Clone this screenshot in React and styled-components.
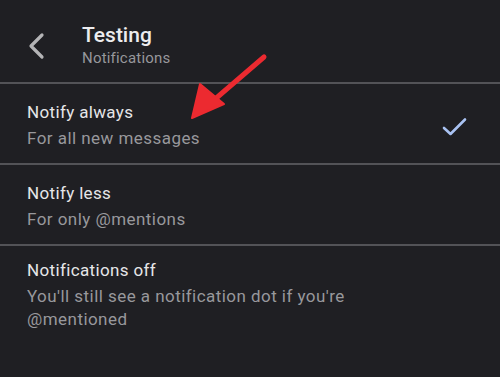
import React from 'react';
import styled, { createGlobalStyle, css } from 'styled-components';

const GlobalStyle = createGlobalStyle`
  html, body {
    margin: 0;
    padding: 0;
    background: #1f1f23;
  }
  body {
    font-family: Roboto, "Liberation Sans", Arial, sans-serif;
    -webkit-font-smoothing: antialiased;
  }
`;

const options = [
  { title: 'Notify always', desc: 'For all new messages', checked: true },
  { title: 'Notify less', desc: 'For only @mentions' },
  { title: 'Notifications off', desc: "You'll still see a notification dot if you're @mentioned", tight: true },
];

class App extends React.Component {
  render() {
    return (
      <Screen>
        <GlobalStyle />
        <Header>
          <BackButton aria-label="Back">
            <svg width="18" height="28" viewBox="0 0 18 28">
              <path d="M15 3 L4 14 L15 25" fill="none" stroke="#b4b4b6" strokeWidth="3.2" strokeLinecap="round" strokeLinejoin="round" />
            </svg>
          </BackButton>
          <HeaderText>
            <Title>Testing</Title>
            <Subtitle>Notifications</Subtitle>
          </HeaderText>
        </Header>
        <Divider />
        {options.map((opt, i) => (
          <React.Fragment key={opt.title}>
            <Row tight={opt.tight}>
              <RowText>
                <RowTitle>{opt.title}</RowTitle>
                <RowDesc>{opt.desc}</RowDesc>
              </RowText>
              {opt.checked && (
                <Check>
                  <svg width="26" height="20" viewBox="0 0 26 20">
                    <path d="M2 11 L8.5 17 L23 2.5" fill="none" stroke="#a9c2f2" strokeWidth="2.6" strokeLinecap="round" strokeLinejoin="round" />
                  </svg>
                </Check>
              )}
            </Row>
            {i < options.length - 1 && <Divider />}
          </React.Fragment>
        ))}
        <Arrow viewBox="0 0 500 377" width="500" height="377">
          <line x1="264" y1="57" x2="214" y2="100" stroke="#ec2a30" strokeWidth="5" strokeLinecap="round" />
          <polygon points="192,118 200,84 224,104" fill="#ec2a30" stroke="#ec2a30" strokeWidth="2" strokeLinejoin="round" />
        </Arrow>
      </Screen>
    );
  }
}

const Screen = styled.div`
  position: relative;
  width: 500px;
  height: 377px;
  overflow: hidden;
  background: #1f1f23;
`;

const Header = styled.div`
  display: flex;
  align-items: center;
  height: 82px;
  padding-left: 27px;
  box-sizing: border-box;
`;

const BackButton = styled.div`
  width: 18px;
  height: 28px;
  margin-top: 10px;
  margin-right: 37px;
  display: flex;
`;

const HeaderText = styled.div`
  display: flex;
  flex-direction: column;
  padding-top: 9px;
`;

const Title = styled.div`
  font-size: 21px;
  font-weight: 500;
  line-height: 24px;
  color: #ececee;
`;

const Subtitle = styled.div`
  font-size: 15px;
  line-height: 22px;
  color: #97979b;
  letter-spacing: 0.2px;
`;

const Divider = styled.div`
  height: 2px;
  background: #535357;
`;

const Row = styled.div`
  display: flex;
  align-items: center;
  padding: 16px 32px 13px 27px;
  ${(props) => props.tight && css`
    padding-top: 12px;
  `}
`;

const RowText = styled.div`
  flex: 1;
  display: flex;
  flex-direction: column;
  gap: 3px;
`;

const RowTitle = styled.div`
  font-size: 17px;
  line-height: 24px;
  color: #e6e6e8;
  letter-spacing: 0.35px;
`;

const RowDesc = styled.div`
  font-size: 17px;
  line-height: 23px;
  color: #98989c;
  letter-spacing: 0.45px;
  max-width: 335px;
`;

const Check = styled.div`
  display: flex;
  margin-top: 4px;
`;

const Arrow = styled.svg`
  position: absolute;
  left: 0;
  top: 0;
  pointer-events: none;
`;

export default App;
